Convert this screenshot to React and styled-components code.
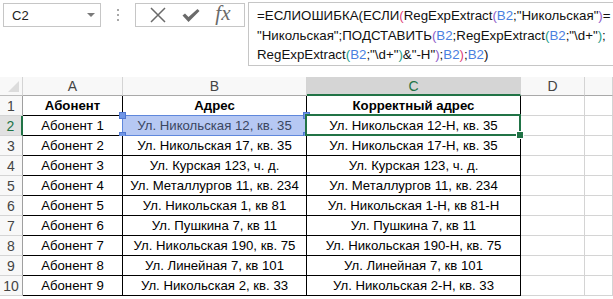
import styled, { createGlobalStyle } from 'styled-components'

const GlobalStyle = createGlobalStyle`
  html, body {
    margin: 0;
    padding: 0;
    background: #fff;
    overflow: hidden;
  }
  body {
    font-family: 'Liberation Sans', Arial, sans-serif;
    width: 613px;
    height: 299px;
  }
`;

const rows = [
  ['Абонент 1', 'Ул. Никольская 12, кв. 35', 'Ул. Никольская 12-Н, кв. 35'],
  ['Абонент 2', 'Ул. Никольская 17, кв. 35', 'Ул. Никольская 17-Н, кв. 35'],
  ['Абонент 3', 'Ул. Курская 123, ч. д.', 'Ул. Курская 123, ч. д.'],
  ['Абонент 4', 'Ул. Металлургов 11, кв. 234', 'Ул. Металлургов 11, кв. 234'],
  ['Абонент 5', 'Ул. Никольская 1, кв 81', 'Ул. Никольская 1-Н, кв 81-Н'],
  ['Абонент 6', 'Ул. Пушкина 7, кв 11', 'Ул. Пушкина 7, кв 11'],
  ['Абонент 7', 'Ул. Никольская 190, кв. 75', 'Ул. Никольская 190-Н, кв. 75'],
  ['Абонент 8', 'Ул. Линейная 7, кв 101', 'Ул. Линейная 7, кв 101'],
  ['Абонент 9', 'Ул. Никольская 2, кв. 33', 'Ул. Никольская 2-Н, кв. 33'],
];

const FormulaBar = styled.div`
  display: flex;
  align-items: flex-start;
  height: 77px;
  padding: 3px 0 0 3px;
  box-sizing: border-box;
`;

const NameBox = styled.div`
  width: 98px;
  height: 24px;
  box-sizing: border-box;
  border: 1px solid #c6c6c6;
  display: flex;
  align-items: center;
  justify-content: space-between;
  padding: 0 5px 0 8px;
  font-size: 13px;
  color: #222;
`;

const Arrow = styled.span`
  width: 0;
  height: 0;
  border-left: 4px solid transparent;
  border-right: 4px solid transparent;
  border-top: 4px solid #7a7a7a;
`;

const Dots = styled.div`
  width: 34px;
  height: 24px;
  display: flex;
  flex-direction: column;
  align-items: center;
  justify-content: center;
  gap: 3px;

  span {
    width: 2px;
    height: 2px;
    background: #a8a8a8;
  }
`;

const Buttons = styled.div`
  width: 110px;
  height: 24px;
  box-sizing: border-box;
  border: 1px solid #c6c6c6;
  display: flex;
  align-items: center;
  justify-content: space-around;
  padding: 0 6px;
`;

const Fx = styled.span`
  font-family: 'Liberation Serif', 'Times New Roman', serif;
  font-style: italic;
  font-size: 21px;
  color: #6a6a6a;
  line-height: 1;
  margin-top: -3px;
`;

const FormulaBox = styled.div`
  flex: 1;
  margin-left: 3px;
  margin-right: -40px;
  height: 64px;
  margin-top: -1px;
  box-sizing: border-box;
  border: 1px solid #c6c6c6;
  padding: 3px 0 0 8px;
  font-size: 13.3px;
  line-height: 19.5px;
  color: #111;
  white-space: nowrap;
`;

const Ref = styled.span`
  color: #4a7fe0;
`;

const Par = styled.span`
  color: ${p => p.$c};
`;

const Sheet = styled.div`
  display: grid;
  grid-template-columns: 23px 100px 184px 214px 64px 1fr;
  grid-template-rows: 19px repeat(10, 20px);
  font-size: 13.2px;
`;

const Corner = styled.div`
  background: #f8f8f8;
  border-right: 1px solid #d4d4d4;
  border-bottom: 1px solid #bdbdbd;
  position: relative;

  &::after {
    content: '';
    position: absolute;
    right: 3px;
    bottom: 3px;
    border-left: 11px solid transparent;
    border-bottom: 11px solid #dcdcdc;
  }
`;

const ColHead = styled.div`
  background: ${p => (p.$active ? '#d5d5d5' : '#f8f8f8')};
  color: ${p => (p.$active ? '#217346' : '#444')};
  border-right: 1px solid #d4d4d4;
  border-bottom: ${p => (p.$active ? '2px solid #217346' : '1px solid #a9a9a9')};
  display: flex;
  align-items: center;
  justify-content: center;
  font-size: 14px;
  padding-top: ${p => (p.$active ? '1px' : '0')};
`;

const RowHead = styled.div`
  background: ${p => (p.$active ? '#e1e1e1' : '#f8f8f8')};
  color: ${p => (p.$active ? '#217346' : '#444')};
  border-right: ${p => (p.$active ? '2px solid #217346' : '1px solid #9f9f9f')};
  border-bottom: 1px solid #d4d4d4;
  display: flex;
  align-items: center;
  justify-content: center;
  font-size: 14px;
`;

const Cell = styled.div`
  position: relative;
  box-sizing: border-box;
  border-right: 1px solid ${p => (p.$table ? '#000' : '#d4d4d4')};
  border-bottom: 1px solid ${p => (p.$table ? '#000' : '#d4d4d4')};
  background: ${p => (p.$sel ? '#b6c8f3' : '#fff')};
  color: ${p => (p.$sel ? '#3a4661' : '#000')};
  font-weight: ${p => (p.$bold ? 700 : 400)};
  display: flex;
  align-items: center;
  justify-content: center;
  white-space: nowrap;
  overflow: visible;
`;

const SelFrame = styled.div`
  position: absolute;
  left: -1px;
  top: -1px;
  right: -1px;
  bottom: -1px;
  border: 1px solid #5f87db;
  pointer-events: none;
`;

const Handle = styled.span`
  position: absolute;
  width: 5px;
  height: 5px;
  background: #7096e6;
  border: 1px solid #4f78d2;
  ${p => (p.$top ? 'top: -4px;' : 'bottom: -4px;')}
  ${p => (p.$left ? 'left: -4px;' : 'right: -4px;')}
`;

const ActiveFrame = styled.div`
  position: absolute;
  left: -2px;
  top: -2px;
  right: -1px;
  bottom: -1px;
  border: 2px solid #217346;
  pointer-events: none;
  z-index: 2;

  &::after {
    content: '';
    position: absolute;
    right: -5px;
    bottom: -5px;
    width: 6px;
    height: 6px;
    background: #217346;
    border: 1px solid #fff;
  }
`;

function XIcon() {
  return (
    <svg width="18" height="18" viewBox="0 0 18 18">
      <path d="M2 2 L16 16 M16 2 L2 16" stroke="#6a6a6a" strokeWidth="1.5" fill="none" />
    </svg>
  );
}

function CheckIcon() {
  return (
    <svg width="18" height="15" viewBox="0 0 18 15">
      <path d="M0.5 7.5 L3 5.5 L6.5 9 L15.5 1 L17.5 3 L6.5 14 Z" fill="#6a6a6a" />
    </svg>
  );
}

const PINK = '#e0457b';
const PURPLE = '#8e5cc9';
const TEAL = '#1f9e8a';

export default function App() {
  return (
    <>
      <GlobalStyle />
      <FormulaBar>
        <NameBox>
          C2
          <Arrow />
        </NameBox>
        <Dots>
          <span />
          <span />
          <span />
        </Dots>
        <Buttons>
          <XIcon />
          <CheckIcon />
          <Fx>fx</Fx>
        </Buttons>
        <FormulaBox>
          <div>
            =ЕСЛИОШИБКА(ЕСЛИ<Par $c={PINK}>(</Par>RegExpExtract<Par $c={PURPLE}>(</Par>
            <Ref>B2</Ref>;"Никольская"<Par $c={PURPLE}>)</Par>=
          </div>
          <div>
            "Никольская";ПОДСТАВИТЬ<Par $c={PURPLE}>(</Par><Ref>B2</Ref>;RegExpExtract
            <Par $c={TEAL}>(</Par><Ref>B2</Ref>;"\d+"<Par $c={TEAL}>)</Par>;
          </div>
          <div>
            RegExpExtract<Par $c={TEAL}>(</Par><Ref>B2</Ref>;"\d+"<Par $c={TEAL}>)</Par>&"-Н"
            <Par $c={PURPLE}>)</Par>;<Ref>B2</Ref><Par $c={PINK}>)</Par>;<Ref>B2</Ref>)
          </div>
        </FormulaBox>
      </FormulaBar>

      <Sheet>
        <Corner />
        <ColHead>A</ColHead>
        <ColHead>B</ColHead>
        <ColHead $active>C</ColHead>
        <ColHead>D</ColHead>
        <ColHead />

        <RowHead>1</RowHead>
        <Cell $table $bold>Абонент</Cell>
        <Cell $table $bold>Адрес</Cell>
        <Cell $table $bold>Корректный адрес</Cell>
        <Cell />
        <Cell />

        {rows.map((r, i) => (
          <Row key={i} n={i + 2} data={r} />
        ))}
      </Sheet>
    </>
  );
}

function Row({ n, data }) {
  const first = n === 2;
  return (
    <>
      <RowHead $active={first}>{n}</RowHead>
      <Cell $table>{data[0]}</Cell>
      <Cell $table $sel={first}>
        {data[1]}
        {first && (
          <SelFrame>
            <Handle $top $left />
            <Handle $top />
            <Handle $left />
            <Handle />
          </SelFrame>
        )}
      </Cell>
      <Cell $table>
        {data[2]}
        {first && <ActiveFrame />}
      </Cell>
      <Cell />
      <Cell />
    </>
  );
}
